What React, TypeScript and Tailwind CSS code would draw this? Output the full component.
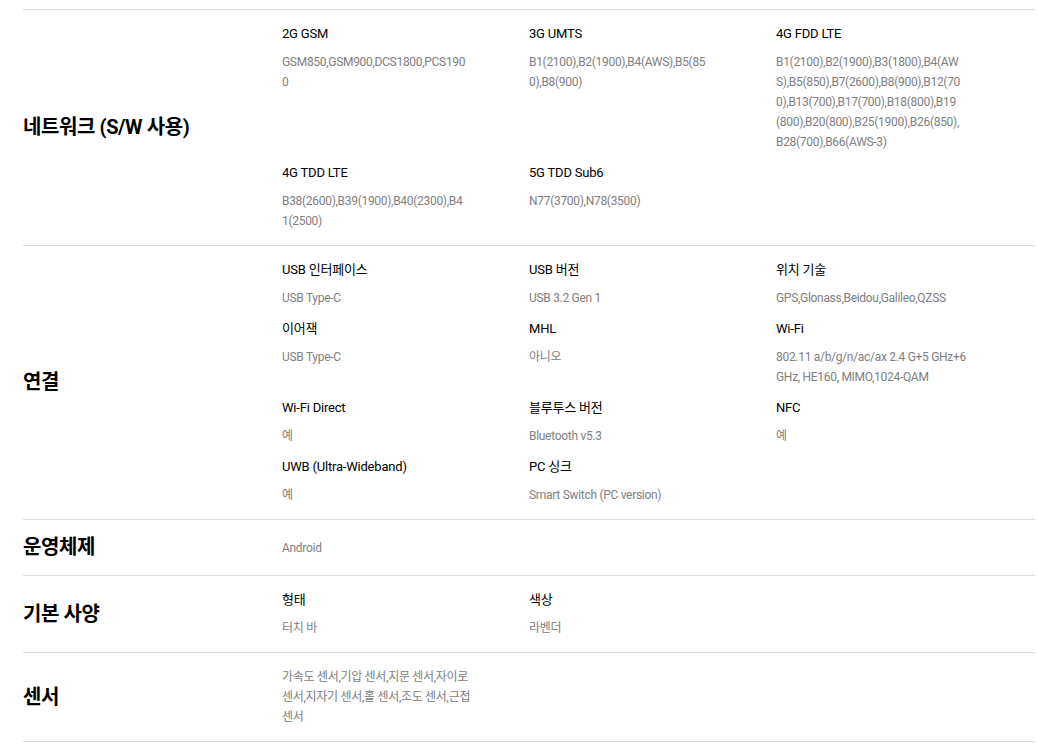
import React from "react";

type Item = { title?: string; lines: string[] };
type Section = { heading: string; items: Item[] };

const sections: Section[] = [
  {
    heading: "네트워크 (S/W 사용)",
    items: [
      { title: "2G GSM", lines: ["GSM850,GSM900,DCS1800,PCS190", "0"] },
      { title: "3G UMTS", lines: ["B1(2100),B2(1900),B4(AWS),B5(85", "0),B8(900)"] },
      {
        title: "4G FDD LTE",
        lines: [
          "B1(2100),B2(1900),B3(1800),B4(AW",
          "S),B5(850),B7(2600),B8(900),B12(70",
          "0),B13(700),B17(700),B18(800),B19",
          "(800),B20(800),B25(1900),B26(850),",
          "B28(700),B66(AWS-3)",
        ],
      },
      { title: "4G TDD LTE", lines: ["B38(2600),B39(1900),B40(2300),B4", "1(2500)"] },
      { title: "5G TDD Sub6", lines: ["N77(3700),N78(3500)"] },
    ],
  },
  {
    heading: "연결",
    items: [
      { title: "USB 인터페이스", lines: ["USB Type-C"] },
      { title: "USB 버전", lines: ["USB 3.2 Gen 1"] },
      { title: "위치 기술", lines: ["GPS,Glonass,Beidou,Galileo,QZSS"] },
      { title: "이어잭", lines: ["USB Type-C"] },
      { title: "MHL", lines: ["아니오"] },
      { title: "Wi-Fi", lines: ["802.11 a/b/g/n/ac/ax 2.4 G+5 GHz+6", "GHz, HE160, MIMO,1024-QAM"] },
      { title: "Wi-Fi Direct", lines: ["예"] },
      { title: "블루투스 버전", lines: ["Bluetooth v5.3"] },
      { title: "NFC", lines: ["예"] },
      { title: "UWB (Ultra-Wideband)", lines: ["예"] },
      { title: "PC 싱크", lines: ["Smart Switch (PC version)"] },
    ],
  },
  {
    heading: "운영체제",
    items: [{ lines: ["Android"] }],
  },
  {
    heading: "기본 사양",
    items: [
      { title: "형태", lines: ["터치 바"] },
      { title: "색상", lines: ["라벤더"] },
    ],
  },
  {
    heading: "센서",
    items: [
      {
        lines: [
          "가속도 센서,기압 센서,지문 센서,자이로",
          "센서,지자기 센서,홀 센서,조도 센서,근접",
          "센서",
        ],
      },
    ],
  },
];

function SpecItem({ item }: { item: Item }) {
  return (
    <div className="flex flex-col">
      {item.title && (
        <div className="text-[13px] leading-[20px] font-normal text-black tracking-[-0.2px]">
          {item.title}
        </div>
      )}
      <div
        className={
          (item.title ? "mt-[8px] " : "") +
          "text-[12px] leading-[20px] text-[#808080] whitespace-nowrap tracking-[-0.3px]"
        }
      >
        {item.lines.map((l, i) => (
          <div key={i}>{l}</div>
        ))}
      </div>
    </div>
  );
}

export default function App() {
  return (
    <div
      className="w-[1038px] h-[746px] bg-white overflow-hidden pt-[9px] pl-[23px] pr-[3px]"
      style={{ fontFamily: 'Roboto, "Noto Sans CJK KR", sans-serif' }}
    >
      <div className="border-b border-[#dddddd]">
        {sections.map((s, idx) => (
          <div key={idx} className="flex items-center border-t border-[#dddddd] py-[14px]">
            <div className="w-[259px] shrink-0 text-[20px] leading-[27px] font-bold text-black tracking-[-0.4px]">
              {s.heading}
            </div>
            <div className="grid grid-cols-[247px_247px_247px] gap-y-[11px] items-start">
              {s.items.map((it, i) => (
                <SpecItem key={i} item={it} />
              ))}
            </div>
          </div>
        ))}
      </div>
    </div>
  );
}
